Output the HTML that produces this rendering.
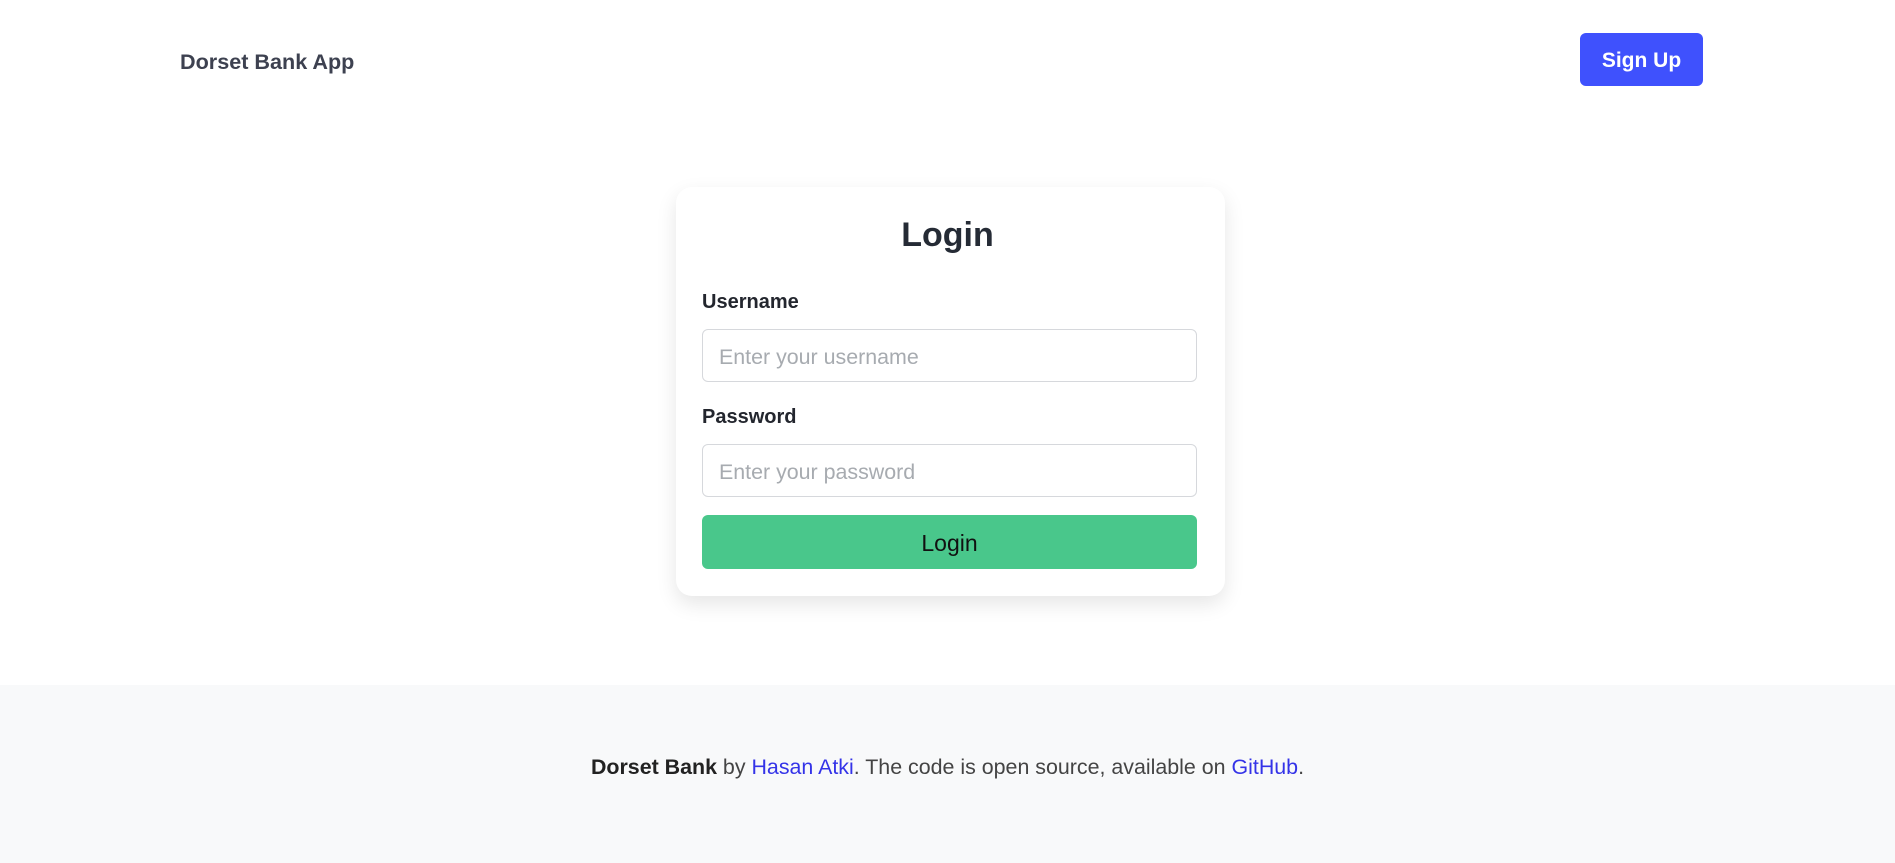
<!DOCTYPE html>
<html><head><meta charset="utf-8"><style>
*{box-sizing:border-box;margin:0;padding:0}
body{width:1895px;height:863px;background:#fff;font-family:"Liberation Sans",sans-serif;position:relative;overflow:hidden;color:#212529}
.brand{position:absolute;left:180px;top:49px;font-size:21.6px;font-weight:bold;color:#3d4150}
.signup{position:absolute;left:1580px;top:33px;width:123px;height:53px;background:#3f51fd;border-radius:6px;color:#fff;font-size:21px;font-weight:bold;text-align:center;line-height:55px}
.card{position:absolute;left:676px;top:187px;width:549px;height:409px;background:#fff;border-radius:16px;box-shadow:0 8px 20px rgba(0,0,0,0.1)}
h1{position:absolute;left:0;width:100%;top:216px;text-align:center;font-size:34px;font-weight:bold;color:#252b35}
.lbl{position:absolute;left:702px;font-size:20px;font-weight:bold;color:#23262e}
.inp{position:absolute;left:702px;width:495px;height:53px;border:1.5px solid #d6d8dc;border-radius:6px;font-size:21.4px;color:#a7abb0;padding-left:16px;line-height:54px}
.btn{position:absolute;left:702px;top:515px;width:495px;height:54px;background:#49c78b;border-radius:6px;font-size:23px;font-weight:normal;text-align:center;line-height:56px;color:#111}
footer{position:absolute;left:0;top:685px;width:1895px;height:178px;background:#f8f9fa;text-align:center;font-size:21.4px;color:#444;padding-top:70px}
footer a{color:#3433e8;text-decoration:none}
</style></head><body>
<div class="brand">Dorset Bank App</div>
<div class="signup">Sign Up</div>
<div class="card"></div>
<h1>Login</h1>
<div class="lbl" style="top:291px">Username</div>
<div class="inp" style="top:329px">Enter your username</div>
<div class="lbl" style="top:406px">Password</div>
<div class="inp" style="top:444px">Enter your password</div>
<div class="btn">Login</div>
<footer><b style="color:#222">Dorset Bank</b> by <a>Hasan Atki</a>. The code is open source, available on <a>GitHub</a>.</footer>
</body></html>
